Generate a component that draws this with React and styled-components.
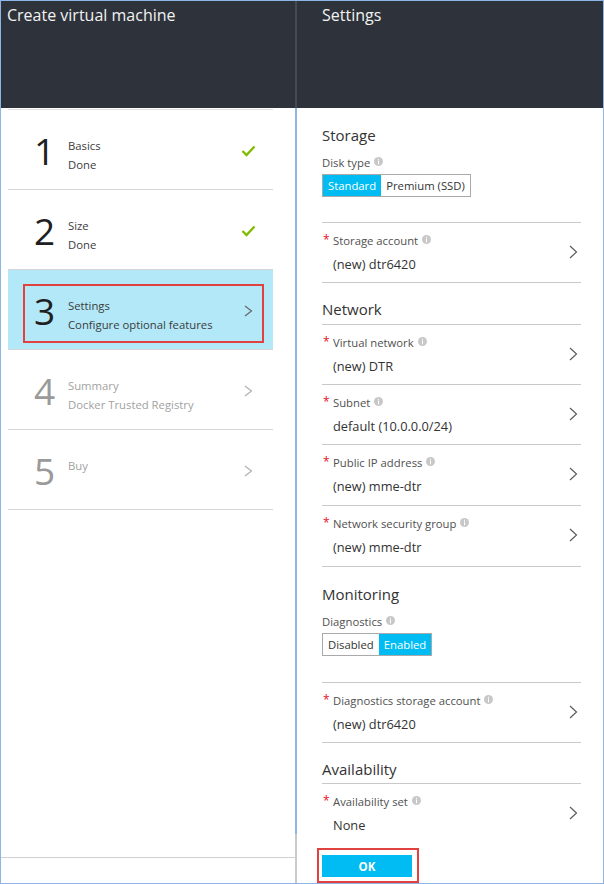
import React from "react";
import styled, { createGlobalStyle } from "styled-components";

const Global = createGlobalStyle`
  html, body { margin: 0; padding: 0; background: #fff; }
  * { box-sizing: border-box; }
  body { font-family: "Open Sans", "Noto Sans", sans-serif; }
`;

const Frame = styled.div`
  width: 604px;
  height: 884px;
  border: 1px solid #8eb5e7;
  display: flex;
  overflow: hidden;
  background: #fff;
`;

const LeftBlade = styled.div`
  width: 294px;
  flex: none;
  display: flex;
  flex-direction: column;
`;

const RightBlade = styled.div`
  flex: 1;
  min-width: 0;
  display: flex;
  flex-direction: column;
`;

const Header = styled.div`
  height: 107px;
  flex: none;
  background: #2e323a;
  color: #f2f2f2;
  font-size: 16px;
  line-height: 20px;
  padding: ${(p) => (p.$right ? "4px 0 0 25px" : "4px 0 0 6px")};
  border-left: ${(p) => (p.$right ? "2px solid #444952" : "none")};
`;

const LeftBody = styled.div`
  flex: 1;
  padding: 1px 22px 0 7px;
`;

const StepList = styled.div`
  border-top: 1px solid #e3e3e3;
`;

const StepRow = styled.div`
  position: relative;
  display: grid;
  grid-template-columns: 34px 1fr 40px;
  align-items: start;
  height: 80px;
  padding: 0 5px 0 26px;
  border-bottom: 1px solid #d6d6d6;
  background: ${(p) => (p.$active ? "#b2e8f7" : "transparent")};
  color: ${(p) => (p.$disabled ? "#a2a2a2" : "#3c3c3c")};
`;

const StepNumber = styled.div`
  font-size: 37px;
  line-height: 40px;
  margin-top: 21px;
  color: ${(p) => (p.$disabled ? "#9a9a9a" : "#202020")};
`;

const StepText = styled.div`
  margin-top: 26px;
  font-size: 11.3px;
  line-height: 19px;
`;

const StepIcon = styled.div`
  align-self: center;
  justify-self: center;
  display: flex;
  margin-top: 2px;
`;

const Annotation = styled.div`
  position: absolute;
  left: 15px;
  top: 14px;
  width: 241px;
  height: 59px;
  border: 2px solid #e1423f;
  pointer-events: none;
`;

const LeftFooter = styled.div`
  height: 26px;
  flex: none;
  border-top: 1px solid #cfcfcf;
`;

const Content = styled.div`
  flex: 1;
  min-height: 0;
  overflow: hidden;
  border-left: 2px solid #8db5e6;
  padding: 0 22px 0 25px;
  color: #333;
`;

const SectionTitle = styled.div`
  font-size: 15px;
  line-height: 22px;
  padding-top: ${(p) => p.$top ?? 16}px;
  margin-bottom: ${(p) => p.$bottom ?? 0}px;
  color: #333;
`;

const PlainLabel = styled.div`
  margin-top: 9px;
  font-size: 11.3px;
  line-height: 16px;
  color: #505050;
  display: flex;
  align-items: center;
`;

const Toggle = styled.div`
  display: inline-flex;
  margin-top: 3px;
  margin-bottom: ${(p) => p.$after}px;
  border: 1px solid #a9a9a9;
`;

const ToggleWrap = styled.div``;

const Segment = styled.div`
  height: 21px;
  line-height: 21px;
  padding: 0 5px;
  font-size: 11.3px;
  background: ${(p) => (p.$on ? "#00bcf2" : "#fff")};
  color: ${(p) => (p.$on ? "#fff" : "#333")};
`;

const FieldList = styled.div`
  border-bottom: 1px solid #c9c9c9;
`;

const FieldRow = styled.div`
  height: ${(p) => p.$h ?? 60}px;
  border-top: 1px solid #c9c9c9;
  display: grid;
  grid-template-columns: 1fr 20px;
  padding-top: 10px;
`;

const FieldMain = styled.div`
  min-width: 0;
`;

const FieldLabel = styled.div`
  font-size: 11.3px;
  line-height: 16px;
  color: #505050;
  display: flex;
  align-items: center;
`;

const Req = styled.span`
  width: 11px;
  flex: none;
  color: #e81123;
  font-size: 12px;
  line-height: 12px;
  padding-left: 1px;
  align-self: flex-start;
  margin-top: 1px;
`;

const FieldValue = styled.div`
  margin-top: 6px;
  padding-left: 11px;
  font-size: 12.8px;
  line-height: 18px;
  color: #333;
`;

const FieldChevron = styled.div`
  align-self: center;
  margin-top: -12px;
  padding-right: 3px;
  display: flex;
  justify-content: flex-end;
`;

const Info = styled.svg`
  margin-left: 4px;
  margin-top: -3px;
  flex: none;
`;

const Footer = styled.div`
  height: 49px;
  flex: none;
  border-left: 2px solid #cacaca;
  padding: 14px 0 0 20px;
`;

const OkFrame = styled.div`
  display: inline-block;
  border: 2px solid #e1423f;
  padding: 5px 5px 4px 3px;
`;

const OkButton = styled.button`
  width: 90px;
  height: 22px;
  border: none;
  background: #00bcf2;
  color: #fff;
  font-family: "Open Sans", sans-serif;
  font-weight: 700;
  font-size: 11.5px;
  padding: 0;
  display: block;
`;

const InfoIcon = () => (
  <Info width="9" height="9" viewBox="0 0 9 9">
    <circle cx="4.5" cy="4.5" r="4.5" fill="#c8c8c8" />
    <rect x="4" y="1.7" width="1" height="1.1" fill="#fff" />
    <rect x="4" y="3.5" width="1" height="3.8" fill="#fff" />
  </Info>
);

const Check = () => (
  <svg width="15" height="12" viewBox="0 0 15 12">
    <path d="M1.5 6 L5.5 10 L13.5 1.5" fill="none" stroke="#7fba00" strokeWidth="2.3" />
  </svg>
);

const Chevron = ({ color = "#5c5c5c", h = 14 }) => (
  <svg width="9" height={h} viewBox={`0 0 9 ${h}`}>
    <path d={`M1 1 L7.5 ${h / 2} L1 ${h - 1}`} fill="none" stroke={color} strokeWidth="1.2" />
  </svg>
);

const steps = [
  { n: 1, title: "Basics", sub: "Done", icon: "check" },
  { n: 2, title: "Size", sub: "Done", icon: "check" },
  { n: 3, title: "Settings", sub: "Configure optional features", icon: "chev", active: true },
  { n: 4, title: "Summary", sub: "Docker Trusted Registry", icon: "chev", disabled: true },
  { n: 5, title: "Buy", sub: "", icon: "chev", disabled: true },
];

const Field = ({ label, value, h }) => (
  <FieldRow $h={h}>
    <FieldMain>
      <FieldLabel>
        <Req>*</Req>
        {label}
        <InfoIcon />
      </FieldLabel>
      <FieldValue>{value}</FieldValue>
    </FieldMain>
    <FieldChevron>
      <Chevron />
    </FieldChevron>
  </FieldRow>
);

export default function App() {
  return (
    <>
      <Global />
      <Frame>
        <LeftBlade>
          <Header>Create virtual machine</Header>
          <LeftBody>
            <StepList>
              {steps.map((s) => (
                <StepRow key={s.n} $active={s.active} $disabled={s.disabled}>
                  <StepNumber $disabled={s.disabled}>{s.n}</StepNumber>
                  <StepText>
                    <div>{s.title}</div>
                    {s.sub && <div>{s.sub}</div>}
                  </StepText>
                  <StepIcon>
                    {s.icon === "check" ? (
                      <Check />
                    ) : (
                      <Chevron h={12} color={s.disabled ? "#b0b0b0" : "#666"} />
                    )}
                  </StepIcon>
                  {s.active && <Annotation />}
                </StepRow>
              ))}
            </StepList>
          </LeftBody>
          <LeftFooter />
        </LeftBlade>

        <RightBlade>
          <Header $right>Settings</Header>
          <Content>
            <SectionTitle>Storage</SectionTitle>
            <PlainLabel>
              Disk type
              <InfoIcon />
            </PlainLabel>
            <ToggleWrap>
              <Toggle $after={25}>
                <Segment $on>Standard</Segment>
                <Segment>Premium (SSD)</Segment>
              </Toggle>
            </ToggleWrap>
            <FieldList>
              <Field label="Storage account" value="(new) dtr6420" />
            </FieldList>

            <SectionTitle $top={15} $bottom={4}>Network</SectionTitle>
            <FieldList>
              <Field label="Virtual network" value="(new) DTR" />
              <Field label="Subnet" value="default (10.0.0.0/24)" />
              <Field label="Public IP address" value="(new) mme-dtr" h={61} />
              <Field label="Network security group" value="(new) mme-dtr" h={61} />
            </FieldList>

            <SectionTitle $top={16}>Monitoring</SectionTitle>
            <PlainLabel>
              Diagnostics
              <InfoIcon />
            </PlainLabel>
            <ToggleWrap>
              <Toggle $after={26}>
                <Segment>Disabled</Segment>
                <Segment $on>Enabled</Segment>
              </Toggle>
            </ToggleWrap>
            <FieldList>
              <Field label="Diagnostics storage account" value="(new) dtr6420" />
            </FieldList>

            <SectionTitle $top={15} $bottom={3}>Availability</SectionTitle>
            <FieldList>
              <Field label="Availability set" value="None" />
            </FieldList>
          </Content>
          <Footer>
            <OkFrame>
              <OkButton>OK</OkButton>
            </OkFrame>
          </Footer>
        </RightBlade>
      </Frame>
    </>
  );
}
